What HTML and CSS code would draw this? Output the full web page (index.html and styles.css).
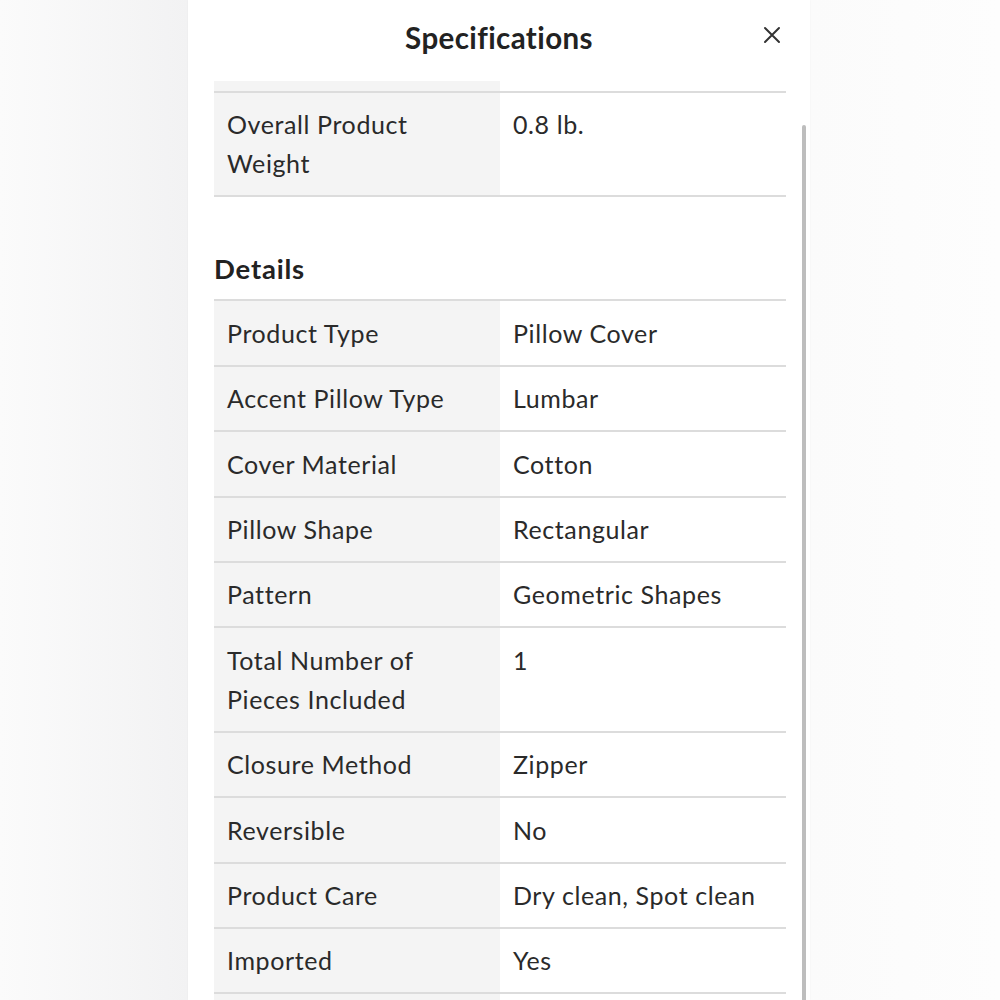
FILE: index.html
```html
<!DOCTYPE html>
<html lang="en">
<head>
<meta charset="utf-8">
<title>Specifications</title>
<link rel="stylesheet" href="styles.css">
</head>
<body>
<div class="stage">
  <div class="panel">
    <header class="panel-head">
      <h1 class="panel-title">Specifications</h1>
      <button class="close" aria-label="Close">
        <svg width="18" height="18" viewBox="0 0 18 18"><path d="M2 2 L16 16 M16 2 L2 16" stroke="#333" stroke-width="2" stroke-linecap="round" fill="none"/></svg>
      </button>
    </header>
    <div class="scroll">
      <div class="stub"><div class="stub-label"></div><div></div></div>
      <dl class="spec">
        <div class="row"><dt>Overall Product Weight</dt><dd>0.8 lb.</dd></div>
      </dl>
      <h2 class="section">Details</h2>
      <dl class="spec">
        <div class="row"><dt>Product Type</dt><dd>Pillow Cover</dd></div>
        <div class="row"><dt>Accent Pillow Type</dt><dd>Lumbar</dd></div>
        <div class="row"><dt>Cover Material</dt><dd>Cotton</dd></div>
        <div class="row"><dt>Pillow Shape</dt><dd>Rectangular</dd></div>
        <div class="row"><dt>Pattern</dt><dd>Geometric Shapes</dd></div>
        <div class="row"><dt>Total Number of Pieces Included</dt><dd>1</dd></div>
        <div class="row"><dt>Closure Method</dt><dd>Zipper</dd></div>
        <div class="row"><dt>Reversible</dt><dd>No</dd></div>
        <div class="row"><dt>Product Care</dt><dd>Dry clean, Spot clean</dd></div>
        <div class="row"><dt>Imported</dt><dd>Yes</dd></div>
      </dl>
      <div class="tail"><div class="stub-label"></div><div></div></div>
    </div>
    <div class="scrollbar"></div>
  </div>
</div>
</body>
</html>
```

FILE: styles.css
```css
* { box-sizing: border-box; }
html, body { margin: 0; padding: 0; }
body {
  width: 1000px;
  height: 1000px;
  overflow: hidden;
  font-family: "Lato", "Noto Sans", sans-serif;
  color: #2a2a2a;
  background: linear-gradient(90deg, #fbfbfb 0%, #f2f2f3 18.8%, #fbfbfb 81%, #fdfdfd 100%);
}
.stage {
  display: flex;
  padding-left: 188px;
  height: 1000px;
}
.panel {
  position: relative;
  width: 622px;
  height: 1000px;
  background: #fff;
  display: flex;
  flex-direction: column;
  overflow: hidden;
  box-shadow: 0 0 2px rgba(0,0,0,0.04);
}
.panel-head {
  height: 81px;
  flex: none;
  display: flex;
  align-items: flex-start;
  justify-content: center;
  position: relative;
}
.panel-title {
  margin: 20px 0 0;
  font-size: 29.5px;
  line-height: 36px;
  font-weight: 700;
  letter-spacing: 0.4px;
  color: #222;
}
.close {
  position: absolute;
  right: 29px;
  top: 26px;
  border: 0;
  background: none;
  padding: 0;
  width: 18px;
  height: 18px;
}
.close svg { display: block; }
.scroll {
  flex: 1;
  padding: 0 24px 0 26px;
  overflow: hidden;
}
.stub {
  display: grid;
  grid-template-columns: 286px 1fr;
  height: 12px;
  border-bottom: 2px solid #dcdcdc;
}
.tail {
  display: grid;
  grid-template-columns: 286px 1fr;
  height: 40px;
}
.stub-label { background: #f4f4f4; }
.spec { margin: 0; }
.row {
  display: grid;
  grid-template-columns: 286px 1fr;
  border-bottom: 2px solid #dcdcdc;
}
.row dt, .row dd {
  margin: 0;
  padding: 12.4px 13px 12px;
  font-size: 25px;
  line-height: 39px;
  letter-spacing: 0.6px;
}
.row dt { background: #f4f4f4; padding-right: 40px; }
.section {
  margin: 56px 0 12px;
  font-size: 27.5px;
  line-height: 32px;
  font-weight: 700;
  letter-spacing: 0.8px;
  color: #222;
  padding-bottom: 2px;
}
.section + .spec { border-top: 2px solid #dcdcdc; }
.scrollbar {
  position: absolute;
  left: 614px;
  top: 125px;
  width: 4px;
  height: 900px;
  border-radius: 2px;
  background: #bdbdbd;
}
```
